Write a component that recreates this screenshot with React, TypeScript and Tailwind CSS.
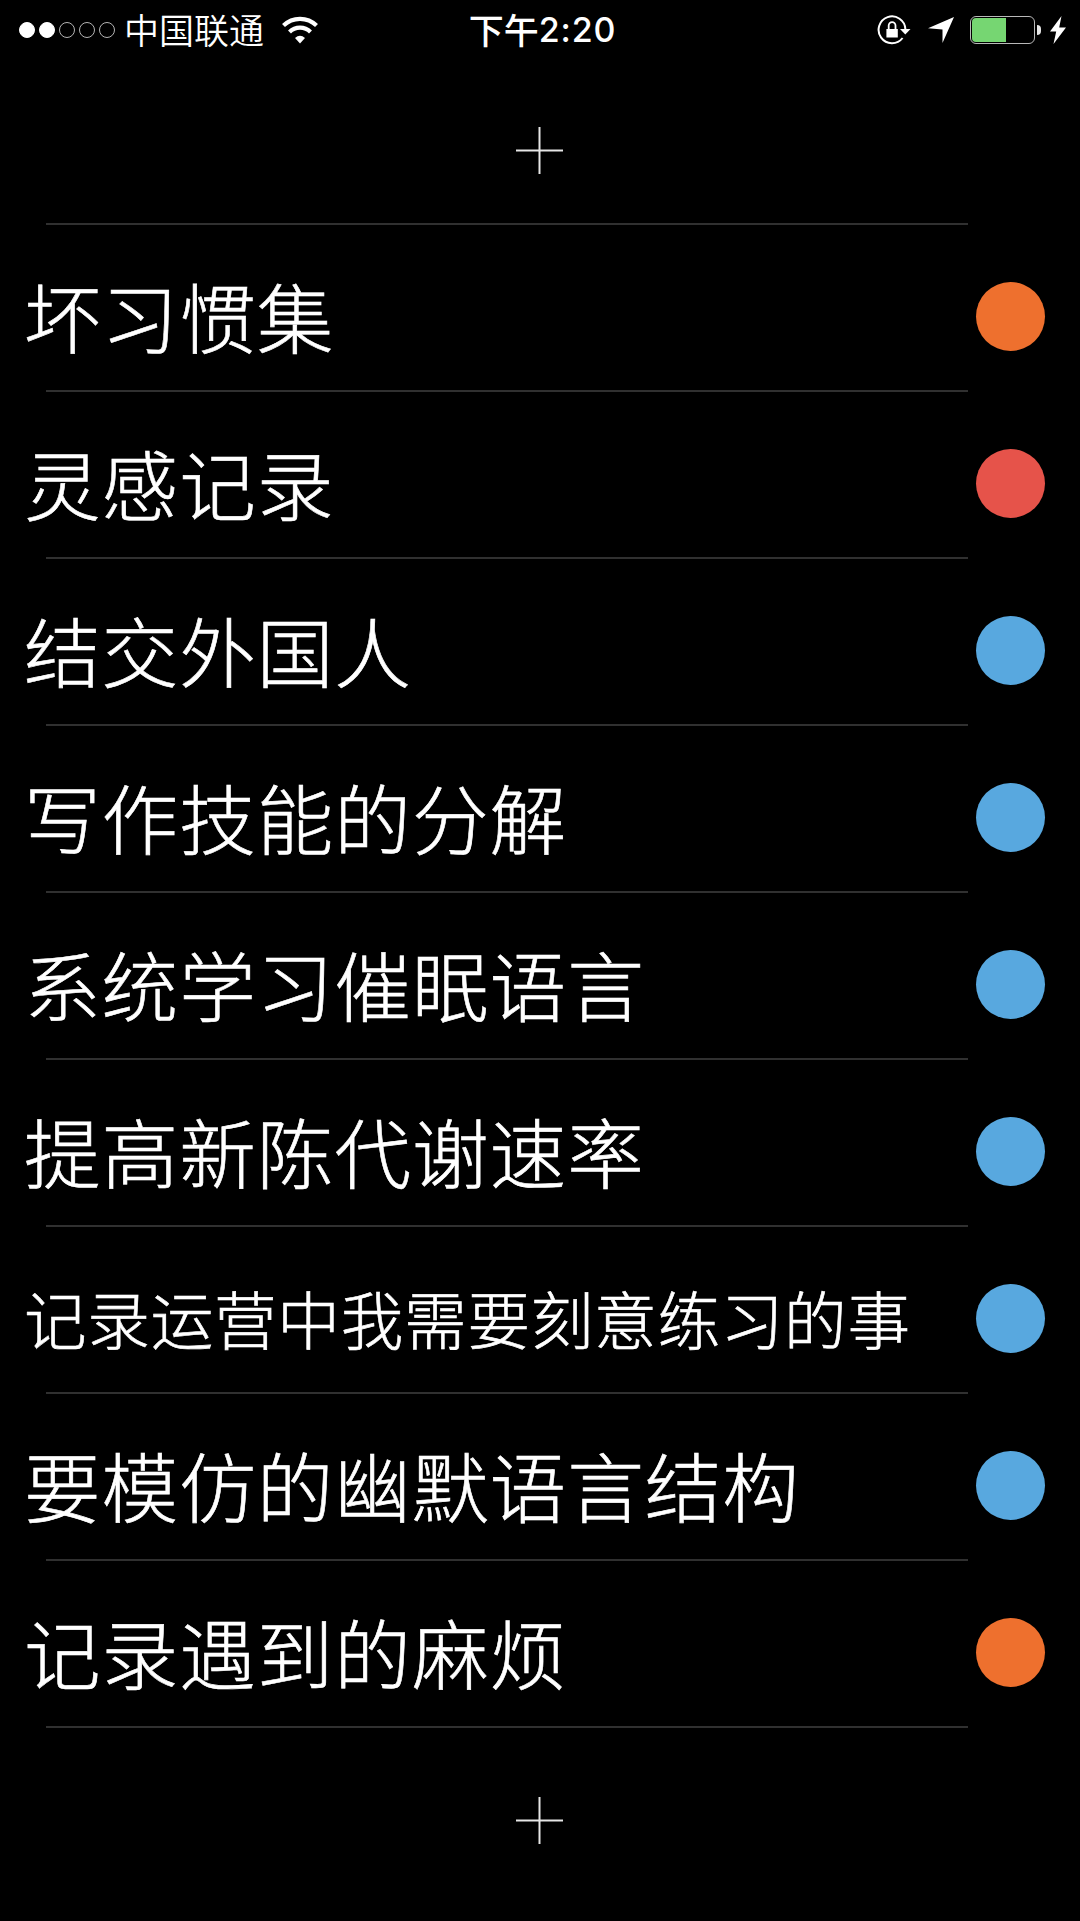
type Item = { title: string; color: string; small?: boolean }

const ORANGE = 'bg-[#ee702e]'
const RED = 'bg-[#e6534a]'
const BLUE = 'bg-[#58a8df]'

const items: Item[] = [
  { title: '坏习惯集', color: ORANGE },
  { title: '灵感记录', color: RED },
  { title: '结交外国人', color: BLUE },
  { title: '写作技能的分解', color: BLUE },
  { title: '系统学习催眠语言', color: BLUE },
  { title: '提高新陈代谢速率', color: BLUE },
  { title: '记录运营中我需要刻意练习的事', color: BLUE, small: true },
  { title: '要模仿的幽默语言结构', color: BLUE },
  { title: '记录遇到的麻烦', color: ORANGE },
]

function StatusBar() {
  return (
    <header className="grid h-[58px] grid-cols-[1fr_auto_1fr] items-center pl-[19px] pr-[14px]">
      <div className="flex items-center">
        <div className="flex gap-1">
          {[true, true, false, false, false].map((on, i) => (
            <span key={i} className={`size-4 rounded-full border ${on ? 'border-white bg-white' : 'border-[#b5b5b5]'}`} />
          ))}
        </div>
        <span className="ml-[9px] pb-[2px] text-[35px] font-[350] leading-[56px]">中国联通</span>
        <svg className="ml-[17px] h-[28px] w-[38px]" viewBox="0 0 38 28" fill="none" stroke="#fff" strokeWidth="4.2">
          <path d="M2.5 9.6a23.6 23.6 0 0 1 33 0" />
          <path d="M8.5 15.9a15 15 0 0 1 21 0" />
          <path d="M19 27.5l-5-5.5q5-4.4 10 0z" fill="#fff" stroke="none" />
        </svg>
      </div>
      <div className="flex font-medium leading-[58px]">
        <span className="text-[35px] leading-[57px]">下午</span>
        <span className="font-['Inter',sans-serif] text-[34px] leading-[60px] tracking-[0.8px]">2:20</span>
      </div>
      <div className="flex items-center justify-end">
        {/* rotation lock */}
        <svg className="h-[30px] w-[34px]" viewBox="0 0 34 30">
          <path d="M28.4 14.2A13.4 13.4 0 1 0 25.6 23" fill="none" stroke="#fff" strokeWidth="2" />
          <path d="M23 14h10.5l-5.2 5.4z" fill="#fff" />
          <path d="M9.4 14h11.4v8.5H9.4z" fill="#fff" />
          <path d="M11.7 14.5v-4a3.4 3.4 0 0 1 6.8 0v4" fill="none" stroke="#fff" strokeWidth="1.8" />
        </svg>
        <svg className="ml-[17px] h-[26px] w-[26px]" viewBox="0 0 26 26" fill="#fff">
          <path d="M26 0L14.5 26V12.5L0 11.2z" />
        </svg>
        <div className="ml-[16px] h-[28px] w-[65px] rounded-[6px] border border-[#b9b9b9] p-px">
          <div className="h-full w-[34px] rounded-l-[4px] bg-[#76d672]" />
        </div>
        <div className="ml-[2px] h-[10px] w-[4px] rounded-r-full bg-[#e5e5e5]" />
        <svg className="ml-[9px] h-[28px] w-[16px]" viewBox="0 0 16 28" fill="#fff">
          <path d="M11.5 0L0 15.5h6.2L3.5 28 16 11.5H9.2z" />
        </svg>
      </div>
    </header>
  )
}

function Plus() {
  return (
    <svg className="mr-[2px] size-[47px]" viewBox="0 0 47 47" stroke="#e6e6e6" strokeWidth="2">
      <path d="M23.5 0v47M0 23.5h47" />
    </svg>
  )
}

function Row({ title, color, small }: Item) {
  return (
    <li className="h-[167px]">
      <div className="flex h-[165px] items-center justify-between pl-[24px] pr-[35px] pt-[18px]">
        <span
          className={`whitespace-nowrap font-light leading-none [-webkit-text-stroke:0.6px_white] ${small ? 'pb-[3px] text-[62.6px] tracking-[0.75px]' : 'pb-[3px] text-[76.6px] tracking-[1px]'}`}
        >
          {title}
        </span>
        <span className={`size-[69px] rounded-full ${color}`} />
      </div>
      <div className="ml-[46px] h-[2px] w-[922px] bg-[#303030]" />
    </li>
  )
}

export default function App() {
  return (
    <div className="flex h-[1921px] w-[1080px] flex-col overflow-hidden bg-black font-['Noto_Sans_CJK_SC',sans-serif] text-white">
      <StatusBar />
      <div className="flex h-[165px] justify-center pt-[69px]">
        <Plus />
      </div>
      <div className="ml-[46px] h-[2px] w-[922px] shrink-0 bg-[#303030]" />
      <ul>
        {items.map(item => <Row key={item.title} {...item} />)}
      </ul>
      <div className="flex justify-center pt-[69px]">
        <Plus />
      </div>
    </div>
  )
}
